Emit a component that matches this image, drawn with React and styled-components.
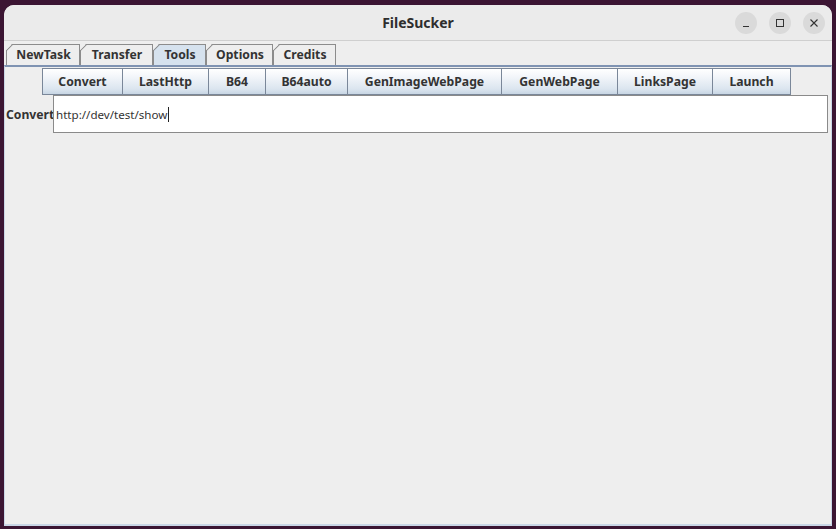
import React from 'react';
import styled, { createGlobalStyle } from 'styled-components';

const GlobalStyle = createGlobalStyle`
  html, body {
    margin: 0;
    padding: 0;
    background: #3b1533;
  }
  * { box-sizing: border-box; }
`;

const Desktop = styled.div`
  width: 836px;
  height: 529px;
  padding: 5px 4px 3px 4px;
  background: #3b1533;
  display: flex;
`;

const Window = styled.div`
  flex: 1;
  display: flex;
  flex-direction: column;
  background: #eeeeee;
  border-radius: 10px 10px 0 0;
  overflow: hidden;
`;

const TitleBar = styled.div`
  height: 36px;
  flex: none;
  display: grid;
  grid-template-columns: 1fr auto 1fr;
  align-items: center;
  background: #ebebeb;
  border-bottom: 1px solid #cfcfcf;
`;

const Title = styled.div`
  grid-column: 2;
  font-family: "Noto Sans", "DejaVu Sans", sans-serif;
  font-weight: 700;
  font-size: 14px;
  color: #2e2e2e;
`;

const Controls = styled.div`
  grid-column: 3;
  justify-self: end;
  display: flex;
  gap: 12px;
  padding-right: 7px;
`;

const CtrlButton = styled.div`
  width: 22px;
  height: 22px;
  border-radius: 50%;
  background: #dadada;
  display: flex;
  align-items: center;
  justify-content: center;
`;

const Body = styled.div`
  flex: 1;
  display: flex;
  flex-direction: column;
  padding: 3px 0 0 0;
  font-family: "Noto Sans", "DejaVu Sans", sans-serif;
`;

const TabRow = styled.div`
  display: flex;
  padding-left: 2px;
  height: 21px;
  align-items: flex-end;
`;

const Tab = styled.div`
  height: 21px;
  width: ${({ $w }) => $w}px;
  display: flex;
  align-items: center;
  justify-content: center;
  padding: 0 0 2px 2px;
  font-size: 12.2px;
  font-weight: 700;
  color: #333333;
  border-top: 1px solid #8c8c8c;
  border-right: 1px solid #8c8c8c;
  background: ${({ $active }) => ($active ? '#d6e2ee' : '#eeeeee')};
  clip-path: polygon(6px 0, 100% 0, 100% 100%, 0 100%, 0 6px);
  position: relative;
  &::before {
    content: '';
    position: absolute;
    left: 0;
    top: 5px;
    bottom: 0;
    width: 1px;
    background: #8c8c8c;
  }
  &::after {
    content: '';
    position: absolute;
    left: -1px;
    top: 2px;
    width: 9px;
    height: 1px;
    background: #8c8c8c;
    transform: rotate(-45deg);
  }
`;

const Pane = styled.div`
  flex: 1;
  border-top: 2px solid #7f93b2;
  border-left: 1px solid #c9d6e6;
  border-right: 1px solid #c9d6e6;
  border-bottom: 2px solid #c9d6e6;
  display: flex;
  flex-direction: column;
  padding-top: 1px;
`;

const ButtonRow = styled.div`
  display: flex;
  justify-content: center;
  padding-right: 2px;
`;

const ToolButton = styled.button`
  height: 27px;
  width: ${({ $w }) => $w}px;
  margin-left: -1px;
  font-family: "Noto Sans", "DejaVu Sans", sans-serif;
  font-size: 12.2px;
  font-weight: 700;
  color: #333333;
  border: 1px solid #7a8799;
  background: linear-gradient(#ffffff 0%, #f3f6fa 30%, #dbe5ef 80%, #c8d6e4 100%);
  padding: 0;
`;

const FieldRow = styled.div`
  display: flex;
  align-items: center;
  padding: 0 3px 0 1px;
`;

const Label = styled.div`
  font-size: 12.2px;
  font-weight: 700;
  color: #333333;
  width: 47px;
  white-space: nowrap;
`;

const Field = styled.div`
  flex: 1;
  height: 38px;
  background: #ffffff;
  border: 1px solid #8a8a8a;
  display: flex;
  align-items: center;
  padding-left: 2px;
  font-family: "Noto Sans", "DejaVu Sans", sans-serif;
  font-size: 11.6px;
  color: #333333;
`;

const Caret = styled.span`
  display: inline-block;
  width: 1px;
  height: 15px;
  background: #222;
  margin-left: 1px;
`;

const tabs = [
  ['NewTask', 74],
  ['Transfer', 73],
  ['Tools', 53],
  ['Options', 67],
  ['Credits', 63],
];
const buttons = [
  ['Convert', 81],
  ['LastHttp', 87],
  ['B64', 58],
  ['B64auto', 83],
  ['GenImageWebPage', 155],
  ['GenWebPage', 117],
  ['LinksPage', 96],
  ['Launch', 79],
];

const App = () => (
  <>
    <GlobalStyle />
    <Desktop>
      <Window>
        <TitleBar>
          <Title>FileSucker</Title>
          <Controls>
            <CtrlButton>
              <svg width="10" height="10" viewBox="0 0 10 10">
                <path d="M2 8.5h6" stroke="#333" strokeWidth="1" />
              </svg>
            </CtrlButton>
            <CtrlButton>
              <svg width="10" height="10" viewBox="0 0 10 10">
                <rect x="1.5" y="1.5" width="7" height="7" fill="none" stroke="#333" strokeWidth="1" />
              </svg>
            </CtrlButton>
            <CtrlButton>
              <svg width="10" height="10" viewBox="0 0 10 10">
                <path d="M1.5 1.5l7 7M8.5 1.5l-7 7" stroke="#333" strokeWidth="1.1" />
              </svg>
            </CtrlButton>
          </Controls>
        </TitleBar>
        <Body>
          <TabRow>
            {tabs.map(([t, w]) => (
              <Tab key={t} $w={w} $active={t === 'Tools'}>{t}</Tab>
            ))}
          </TabRow>
          <Pane>
            <ButtonRow>
              {buttons.map(([b, w]) => (
                <ToolButton key={b} $w={w}>{b}</ToolButton>
              ))}
            </ButtonRow>
            <FieldRow>
              <Label>Convert</Label>
              <Field>
                http://dev/test/show<Caret />
              </Field>
            </FieldRow>
          </Pane>
        </Body>
      </Window>
    </Desktop>
  </>
);

export default App;
